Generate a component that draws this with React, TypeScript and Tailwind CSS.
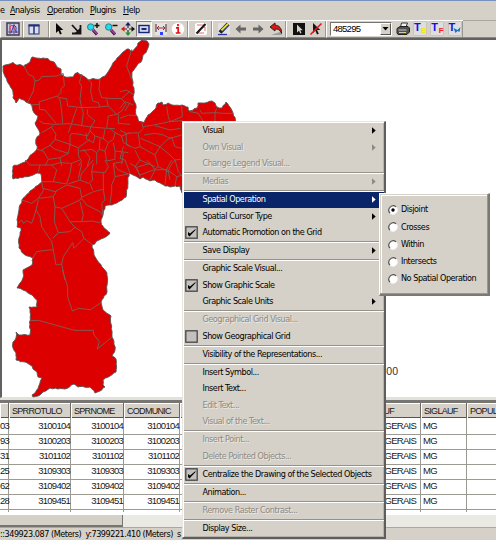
import React from 'react';

type Pt = [number, number];

const outline =
  '3,66 8,64.5 13,62.5 16,65 20,64.5 25,67 24.5,65 30,62 32,57 36,58 48,58.5 50,61 54,62 57,67 61,69 61,74 65,77 73,77 75,73.5 78,72.5 82,75 88,80 93,78.5 100,79 105,76 108,72 111,67 113,63 117,58 122,53 127,49 133,51 138,43 142,40 147,41 149,44 147,50 143,55 142,60 136,67 132,72 132.5,80 134,90 133,97 136,105 136,115 139,121.5 144,122.5 147,117 152,112 156,108 158,103 162,102 163,105 168,103 172,105 182,105 188,107 189,111 197,108 198,103 205,103 212,101 215,103 217,107 222,108 226,102 229,106 233,113 236,122 236,140 200,190 182,193 180,186 170,187 165,186 155,180 150,181 143,177 140,179 133,175 129,173 128,183 126,197 120,201 112,205 105,206 103,215 101,222 104,228 110,233 107,236 99,240 92,245 94,255 97,260 102,267 107,273 107,292 101,302 103,310 111,316 112,337 114,342 115,350 112,356 116,359 116,372 110,376 103,380 103,385 105,387 100,391 95,393 90,387 78,387 74,384 65,389 50,388 43,392 40,395 33,397 32,395 35,393 40,383 42,378 38,377 37,372 33,369 32,366 25,362 16,360 16,353 13,348 13,342 16,338 16,332 19,335 30,335 30,312 29,307 37,307 37,300 32,295 23,290 17,288 20,283 23,278 23,270 32,265 33,258 25,255 19,248 19,238 21,228 17,227 17,220 19,210 22,200 30,191 42,182 41,174 37,173 30,176 13,179 13,166 20,164 25,162 32,154 37,149 36,139 40,133 35,123 38,116 33,111 31,104 28,103 19,98 16,103 13,98 12,89 7,81 4,74';

// Breaks each long coast segment into short steps with a small deterministic offset.
function roughen(src: string, amp: number): string {
  const pts = src.split(' ').map((p) => p.split(',').map(Number) as Pt);
  const out: string[] = [];
  let seed = 7;
  const rnd = () => {
    seed = (seed * 16807) % 2147483647;
    return seed / 2147483647 - 0.5;
  };
  pts.forEach((p, i) => {
    const q = pts[(i + 1) % pts.length];
    const n = Math.max(1, Math.round(Math.hypot(q[0] - p[0], q[1] - p[1]) / 2.5));
    for (let k = 0; k < n; k++) {
      const t = k / n;
      const j = k === 0 ? 0 : amp;
      out.push(
        `${(p[0] + (q[0] - p[0]) * t + rnd() * j).toFixed(1)},${(p[1] + (q[1] - p[1]) * t + rnd() * j).toFixed(1)}`,
      );
    }
  });
  return out.join(' ');
}

const north =
  'M73,92 85,115 100,122 105,135 100,165 83,200M105,135 118,132 125,122 170,120 190,112M190,113 193,150 183,158 183,170 172,180 135,192 118,197 118,220 135,222 168,262M92,207 118,205M118,255 130,262 160,265 210,263 265,272 320,277 345,278M172,180 180,192 185,225 188,262M178,185 200,188 203,210 245,215 240,190 245,150 238,140 245,115M230,218 222,240 215,262M245,215 250,230 245,270M245,215 300,213 295,200 278,195 272,165 275,140 265,132M300,129 297,160 305,185 325,187 365,188 390,165M320,190 325,210 300,213M325,210 350,235 365,225 378,205 365,188M355,235 355,262 390,265M350,235 325,240 320,275M262,220 262,235 285,255 272,272 270,285M125,290 160,270M155,275 168,295 165,310 150,328 125,342M165,310 210,325 210,300 215,292 240,295 262,300 270,285 285,300 280,320 260,310 258,290M110,340 130,345 145,370 135,390M215,263 205,290M210,325 235,335 270,310M150,328 165,340 205,352 210,325M235,335 235,360 245,375 235,390M240,345 275,340 290,350 290,385M285,300 310,308 315,280M300,308 298,340 290,350M310,308 325,320 340,310 345,290 330,278M325,320 315,345 298,340M340,320 345,345 385,350M345,290 365,300 390,290M365,300 370,320 390,330M315,345 320,375 345,370 345,345M370,350 365,385M250,340 270,365 262,390M205,352 180,365 185,390M145,370 180,365M395,40 380,90 395,130M390,200 375,225';
const east =
  'M0,35 20,30 42,45M0,85 15,65 40,75M0,115 25,105 48,107M65,128 70,145 55,160 60,200 45,205 20,195 18,160 0,150M20,160 55,158M70,140 100,135 150,125 187,122M72,165 105,160 130,165 150,175 185,165M105,137 150,150 182,145M62,175 120,200 105,225 115,260 145,275 150,260 165,240 182,238M120,200 140,180 155,172M120,200 150,225 165,240M60,200 105,225M10,200 0,235 15,240 30,280M45,210 60,240 45,260 60,285M60,240 105,260M140,80 145,110 150,125M185,78 187,110 150,125M210,95 235,100 250,125M240,90 245,100 285,98 290,85M285,98 285,125M285,98 310,100 340,100M145,275 150,300M165,240 175,275 187,290M60,285 100,270 115,260M155,172 165,200 185,205';
const middle =
  'M75,0 90,15 120,15 155,15 180,8 215,10 240,0M120,15 115,35M155,15 170,30 160,65 125,65M160,65 200,72 210,40 215,10M205,72 240,60 245,40 280,0M245,10 235,55M240,60 265,70 278,60 275,35 315,38M275,35 280,10M310,38 310,90 315,120 305,130 308,160M335,95 330,130M385,42 345,50 335,75 335,95M65,120 95,130 115,115 130,92 125,65M130,85 165,95 200,75 240,85 245,112M160,110 170,90M165,140 185,145 240,120 245,112 280,95 310,88M245,115 260,135 300,155 308,165M115,115 160,110 165,140M115,120 108,150 120,170 125,200 155,245 160,270 168,315 185,312M165,140 163,185 175,218M185,145 210,185 225,202M240,125 250,165 245,185 210,185M245,185 275,183 300,188M175,218 158,235M175,218 210,215 225,202 245,215 252,235 277,254M252,235 222,265 218,248 190,290 185,312 195,360M98,295 110,275 145,270 160,270M55,190 65,180 70,190 80,182 95,190 102,170 108,150M278,90 270,70M315,0 325,20 315,38M340,10 355,30 385,42M345,50 340,10 370,5M390,10 410,22 420,50M410,22 450,10 465,30 450,60M465,30 500,28 495,75M500,28 530,50 525,78M450,10 440,0M500,28 515,0M530,50 548,45';
const south =
  'M187,0 203,50 203,80 217,123 235,115 272,119 304,97M91,152 115,151 205,176 225,181 280,181 281,193 298,215 292,237 335,202';

function MapDrawing() {
  return (
    <svg className="absolute left-0 top-0" width="250" height="400" viewBox="0 0 250 400" fill="none">
      <polygon points={roughen(outline, 1.3)} fill="#dd0000" stroke="#555" strokeWidth="0.9" />
      <g stroke="#7b6158" strokeWidth="2.7" strokeLinejoin="round">
        <path d={north} transform="translate(0 36) scale(.33333)" />
        <path d={east} transform="translate(120 80) scale(.33333)" />
        <path d={middle} transform="translate(0 160) scale(.33333)" />
        <path d={south} transform="translate(0 270) scale(.33333)" />
      </g>
    </svg>
  );
}

function Ico({ children }: { children: React.ReactNode }) {
  return (
    <span className="flex w-[17.3px] shrink-0 items-center justify-center">
      <svg width="14" height="14" viewBox="0 0 14 14" fill="none">
        {children}
      </svg>
    </span>
  );
}

function Group({ className, children }: { className: string; children: React.ReactNode }) {
  return (
    <div
      className={`flex h-[18px] shrink-0 items-center border-y border-l border-t-white border-b-[#8a8780] border-l-white shadow-[inset_-1px_0_0_#9a978f] ${className}`}
    >
      {children}
    </div>
  );
}

const pointer = 'M4 1v10l2.4-2.2L8 12.6l1.8-.8-1.7-3.7h3.2z';

function Lens({ plus }: { plus?: boolean }) {
  return (
    <>
      <path d="M7 8l4 4.500" stroke="#222" strokeWidth="3" />
      <path d="M7 8l4.200 4" stroke="#c22cc8" strokeWidth="1.700" />
      <circle cx="4.700" cy="5" r="3.200" fill="#20dcec" stroke="#357d88" />
      <path d={plus ? 'M8.500 3.500h5M11 1v5' : 'M8.500 3.500h5'} stroke="#111" strokeWidth="1.500" />
    </>
  );
}

function TIcon({ letter, color }: { letter: string; color: string }) {
  return (
    <span className="flex w-[17.3px] shrink-0 justify-center">
      <span className="relative h-[13px] w-[12px] bg-[#dedede] font-['Liberation_Sans',sans-serif] font-bold shadow-[0_0_1px_#888]">
        <span className="absolute left-0 top-0 text-[11px] leading-[11px] text-[#1111e0]">T</span>
        {letter === 'W' ? (
          <svg className="absolute bottom-[1px] right-0" width="8" height="7" viewBox="0 0 7 7">
            <path d="M0 1l2 5 2-2 2 1 1-5-3 3z" fill="#1674b8" />
          </svg>
        ) : (
          <span className={`absolute bottom-0 right-0 text-[8px] leading-[8px] ${color}`}>{letter}</span>
        )}
      </span>
    </span>
  );
}

function Toolbar() {
  return (
    <div className="flex h-[19px] shrink-0 items-center bg-[#d5d1c8]">
      <Group className="w-[22.500px] pl-[3px]">
        <Ico>
          <rect x="1" y="1" width="12" height="12" fill="#c8c8e6" stroke="#3b3b58" strokeWidth="1.500" />
          <path d="M4 2v10M2 10h10M8 2v10" stroke="#5b5b88" />
          <path d="M4 11V5l2-2 2 3 3 5" stroke="#e04050" />
          <path d="M5 11l3-8 2 2v6" stroke="#2638c8" />
        </Ico>
      </Group>
      <Group className="w-[26.500px] pl-[2px]">
        <Ico>
          <rect x="2" y="3" width="10" height="9" fill="#dcdcea" stroke="#20307c" />
          <path d="M1.500 3.500h11" stroke="#20307c" strokeWidth="2" />
          <path d="M7 3v9" stroke="#20307c" strokeWidth="1.500" />
        </Ico>
      </Group>
      <Group className="w-[139px]">
        <Ico>
          <path d={pointer} fill="#080808" />
        </Ico>
        <Ico>
          <path d="M3 3l6 6.500M11.500 3v8.500H3" stroke="#151515" strokeWidth="1.800" />
          <path d="M6 11h5V6z" fill="#151515" />
        </Ico>
        <Ico>
          <Lens plus />
        </Ico>
        <Ico>
          <Lens />
        </Ico>
        <Ico>
          <path d="M7 2v4M7 8v4M2 7h4M8 7h4" stroke="#333" strokeWidth="1.200" />
          <path d="M7 0l2.800 3.500H4.200z" fill="#18187c" />
          <path d="M0 7l3.500-2.800v5.600z" fill="#e01818" />
          <path d="M14 7l-3.500-2.800v5.600z" fill="#111" />
          <path d="M7 14l2.800-3.500H4.200z" fill="#169928" />
        </Ico>
        <span className="flex h-[16px] w-[16px] shrink-0 items-center justify-center border border-[#85827a] border-b-white border-r-white bg-[#e9e7e2]">
          <svg width="12" height="12" viewBox="0 0 12 12" fill="none">
            <rect x="1" y="2.500" width="10" height="7" stroke="#16257c" strokeWidth="1.400" fill="#d4d6ee" />
            <path d="M3.500 6h5" stroke="#16257c" strokeWidth="2" />
          </svg>
        </span>
        <Ico>
          <rect x="1" y="1" width="12" height="12" fill="#e5e2e0" />
          <path d="M2 2v8M12 2v8" stroke="#442233" />
          <path d="M3 6h8M5 4L3 6l2 2M9 4l2 2-2 2" stroke="#a02840" />
          <path d="M6 10h3v3H6z" fill="#3040ff" />
        </Ico>
        <Ico>
          <circle cx="7" cy="7" r="6.300" fill="#fff" />
          <path d="M7 2v2.200M5 5.800h2.200V11M4.700 11h4.800" stroke="#e81010" strokeWidth="1.700" />
        </Ico>
      </Group>
      <Group className="w-[24px] pl-[3px]">
        <Ico>
          <rect x="1" y="1" width="12" height="12" rx="2" fill="#fff" />
          <path d="M3 3h7L3.500 11H10M8 5h3v4" stroke="#ee6a6a" />
          <path d="M2.500 11.500l9-9.500" stroke="#161616" strokeWidth="2" />
        </Ico>
      </Group>
      <Group className="w-[74px] pl-[2px]">
        <Ico>
          <rect x="1" y="1" width="12" height="11" fill="#e3e1dd" />
          <path d="M3 10.500L11 2" stroke="#222" strokeWidth="4" />
          <path d="M4.500 8.500L11 2" stroke="#f4e62a" strokeWidth="2.200" />
          <path d="M5.500 9.500L12 3" stroke="#263bc0" strokeWidth="1.200" />
          <path d="M1 12.500h9" stroke="#2636a8" strokeWidth="1.300" />
        </Ico>
        <Ico>
          <path d="M1.500 7l5-4.500v3H12v3H6.500v3z" fill="#666" />
        </Ico>
        <Ico>
          <path d="M12.500 7l-5-4.500v3H2v3h5.500v3z" fill="#666" />
        </Ico>
        <Ico>
          <path d="M5 12l6-2 2 3H2z" fill="#9b9b9b" />
          <path d="M1 5l5-4v2.200c4 0 7 3 6.500 8.300C11 8 9 6.700 6 7v2z" fill="#e31515" stroke="#222" />
        </Ico>
      </Group>
      <Group className="w-[40px] pl-[3px]">
        <Ico>
          <rect x="1" y="1" width="12" height="12" fill="#101010" />
          <path d="M5 2.500v8l2-1.700 1.300 2.800 1.200-.6-1.200-2.700h2.500z" fill="#d5d1c8" />
        </Ico>
        <Ico>
          <path d={pointer} fill="#161616" />
          <path d="M1.500 12.500L12.500 1.500" stroke="#ee1515" strokeWidth="1.600" />
        </Ico>
      </Group>
      <Group className="w-[137px] pl-[3px]">
        <div className="mr-[2px] flex h-[14px] w-[62px] shrink-0 items-center justify-between border border-[#77746e] border-b-white border-r-white bg-white pl-[2px]">
          <span className="font-['Liberation_Sans',sans-serif] text-[9.5px] leading-none tracking-[-0.75px]">485295</span>
          <span className="flex h-[12px] w-[11px] items-center justify-center border border-white border-b-[#555] border-r-[#555] bg-[#d5d1c8]">
            <svg width="7" height="4" viewBox="0 0 7 4">
              <path d="M.5 0h6l-3 3.500z" fill="#000" />
            </svg>
          </span>
        </div>
        <Ico>
          <path d="M4.500 5l1-4h6l-1.500 4" fill="#f1f1f1" stroke="#333" />
          <path d="M1 6.500L4 4.500h8l1.500 1.500v4L11 12.500H2L1 11z" fill="#505050" stroke="#222" />
          <path d="M2.500 8h8M3 10.500h6" stroke="#c8c8c8" />
          <path d="M8 10.500h2" stroke="#e8e050" />
        </Ico>
        <TIcon letter="E" color="text-[#eee516]" />
        <TIcon letter="F" color="text-[#f01818]" />
        <TIcon letter="W" color="text-[#1674b8]" />
      </Group>
      <div className="h-[18px] flex-1 border-y border-b-[#8a8780] border-t-[#aaa79f]" />
    </div>
  );
}

type Item = { t: string; off?: boolean; sub?: boolean; box?: 'on' | 'off'; sel?: boolean };

const sections: Item[][] = [
  [
    { t: 'Visual', sub: true },
    { t: 'Own Visual', off: true, sub: true },
    { t: 'Change Legend Visual...', off: true },
  ],
  [{ t: 'Medias', off: true, sub: true }],
  [
    { t: 'Spatial Operation', sub: true, sel: true },
    { t: 'Spatial Cursor Type', sub: true },
    { t: 'Automatic Promotion on the Grid', box: 'on' },
  ],
  [{ t: 'Save Display', sub: true }],
  [
    { t: 'Graphic Scale Visual...' },
    { t: 'Show Graphic Scale', box: 'on' },
    { t: 'Graphic Scale Units', sub: true },
  ],
  [
    { t: 'Geographical Grid Visual...', off: true },
    { t: 'Show Geographical Grid', box: 'off' },
  ],
  [{ t: 'Visibility of the Representations...' }],
  [
    { t: 'Insert Symbol...' },
    { t: 'Insert Text...' },
    { t: 'Edit Text...', off: true },
    { t: 'Visual of the Text...', off: true },
  ],
  [
    { t: 'Insert Point...', off: true },
    { t: 'Delete Pointed Objects...', off: true },
  ],
  [{ t: 'Centralize the Drawing of the Selected Objects', box: 'on' }],
  [{ t: 'Animation...' }],
  [{ t: 'Remove Raster Contrast...', off: true }],
  [{ t: 'Display Size...' }],
];

function Row({ item }: { item: Item }) {
  const tone = item.sel
    ? 'bg-[#0a246a] text-white'
    : item.off
      ? 'text-[#8d8a83] [text-shadow:1px_1px_0_#eceae5]'
      : 'text-black';
  return (
    <div className={`flex h-[16.5px] items-center ${tone}`}>
      <span className="flex w-[18.5px] shrink-0 pl-[1px]">
        {item.box && (
          <svg width="13" height="13" viewBox="0 0 13 13" fill="none">
            <rect x=".8" y=".8" width="11.400" height="11.400" fill="#c3c1be" stroke="#454545" strokeWidth="1.300" />
            {item.box === 'on' && <path d="M3 6v3l1.500 1.500L10.500 4V3L5 7.500z" fill="#000" />}
          </svg>
        )}
      </span>
      <span className="flex-1 whitespace-nowrap">{item.t}</span>
      {item.sub && (
        <svg className="mr-[8.5px]" width="4" height="7" viewBox="0 0 4 7">
          <path d="M0 .3v6.400l3.700-3.200z" fill="currentColor" />
        </svg>
      )}
    </div>
  );
}

function ContextMenu() {
  return (
    <div className="absolute left-[182px] top-[121px] h-[418px] w-[204px] border border-[#e8e6e0] border-b-2 border-r-2 border-b-[#5f5e5c] border-r-[#5f5e5c] bg-[#d5d1c8] pl-[1px] pt-[0.7px] text-[9px] shadow-[inset_1px_1px_0_#fff,inset_-1px_-1px_0_#b5b2aa]">
      {sections.map((s, i) => (
        <React.Fragment key={i}>
          {i > 0 && (
            <div className="flex h-[1.5px] items-start">
              <div className="h-px w-full bg-[#95928b] shadow-[0_1px_0_#fff]" />
            </div>
          )}
          {s.map((it) => (
            <Row key={it.t} item={it} />
          ))}
        </React.Fragment>
      ))}
    </div>
  );
}

function SubMenu() {
  return (
    <div className="absolute left-[379px] top-[193px] flex h-[103px] w-[111px] flex-col border border-white border-b-2 border-r-2 border-b-[#7b7974] border-r-[#7b7974] bg-[#d5d1c8] pl-[8px] pt-[7.500px] text-[9px] shadow-[inset_-1px_-1px_0_#9a978f,inset_1px_1px_0_#d5d1c8,inset_2px_2px_0_#fff]">
      {['Disjoint', 'Crosses', 'Within', 'Intersects', 'No Spatial Operation'].map((t, i) => (
        <div key={t} className="flex h-[17.25px] items-center gap-[3px]">
          <svg className="shrink-0" width="10" height="10" viewBox="0 0 10 10" fill="none">
            <circle cx="5" cy="5" r="4.300" fill="#fff" stroke="#f6f5f2" />
            <path d="M1.900 8.100A4.400 4.400 0 0 1 8.100 1.900" stroke="#55534f" strokeWidth="1.200" />
            {i === 0 && <circle cx="5" cy="5" r="1.700" fill="#000" />}
          </svg>
          <span className="whitespace-nowrap">{t}</span>
        </div>
      ))}
    </div>
  );
}

const cols = 'grid grid-cols-[9px_62px_53px_56px_241px_46px_29px]';
const rows: [string, string][] = [
  ['03', '3100104'],
  ['93', '3100203'],
  ['31', '3101102'],
  ['25', '3109303'],
  ['62', '3109402'],
  ['28', '3109451'],
];

function DataGrid() {
  const head = 'border-r border-[#6a6864] pl-[3px] shadow-[inset_1px_1px_0_#fff]';
  const cell = 'border-b border-r border-[#9c9b93] text-right';
  return (
    <div className="h-[112px] shrink-0 overflow-hidden bg-white font-['Liberation_Sans',sans-serif] text-[9.5px] text-[#181818]">
      <div className={`${cols} h-[15px] border-b border-[#55534f] bg-[#d5d1c8] leading-[16px] text-[9px] tracking-[-0.7px]`}>
        <span className={head} />
        <span className={head}>SPRROTULO</span>
        <span className={head}>SPRNOME</span>
        <span className={head}>CODMUNIC</span>
        <span className={`${head} text-right`}>
          <span className="pr-[26px]">UF</span>
        </span>
        <span className={head}>SIGLAUF</span>
        <span className="pl-[3px] shadow-[inset_1px_1px_0_#fff]">POPUL</span>
      </div>
      {rows.map(([a, b]) => (
        <div key={b} className={`${cols} h-[15px] leading-[16px] tracking-[-0.75px]`}>
          <span className={cell}>{a}</span>
          <span className={cell}>{b}</span>
          <span className={cell}>{b}</span>
          <span className={cell}>{b}</span>
          <span className={`${cell} pr-[4px]`}>GERAIS</span>
          <span className="border-b border-r border-[#9c9b93] pl-[2px]">MG</span>
          <span className="border-b border-[#9c9b93]" />
        </div>
      ))}
      <div className={`${cols} h-[4px]`}>
        {[0, 1, 2, 3, 4, 5].map((i) => (
          <span key={i} className="border-r border-[#9c9b93]" />
        ))}
      </div>
    </div>
  );
}

export default function App() {
  return (
    <div className="relative flex h-[540px] w-[496px] flex-col overflow-hidden bg-[#d5d1c8] font-['DejaVu_Sans_Condensed','DejaVu_Sans',sans-serif] tracking-[-0.46px] text-black">
      <div className="h-[1px] shrink-0 bg-[#7890bd]" />
      <nav className="flex h-[18px] shrink-0 items-center text-[9px] leading-[14px]">
        <span className="w-[10px]">e</span>
        <span className="w-[37px]"><u>A</u>nalysis</span>
        <span className="w-[43px]"><u>O</u>peration</span>
        <span className="w-[33px]"><u>P</u>lugins</span>
        <span><u>H</u>elp</span>
      </nav>
      <Toolbar />
      <div className="h-[360px] shrink-0 border-l-2 border-t-2 border-[#62615f] border-b border-b-[#e3e1dc] bg-white">
        <div className="flex h-full items-end justify-end pb-[21px] pr-[98px] font-['Liberation_Sans',sans-serif] text-[10.5px] leading-none tracking-normal text-[#333]">
          00
        </div>
      </div>
      <div className="h-[5px] shrink-0 border-b-[3px] border-t-2 border-b-[#777572] border-t-[#e3e1dc]" />
      <DataGrid />
      <div className="flex h-[13px] shrink-0 bg-[#ebe9e4] border-b border-[#aaa79f]">
        <div className="w-[123px] border-b-2 border-r border-[#77756f] bg-[#d5d1c8]" />
      </div>
      <div className="flex flex-1 items-center whitespace-nowrap text-[9px] leading-[13px]">
        <span className="whitespace-pre">::349923.087 (Meters)  y:7399221.410 (Meters)  s</span>
      </div>
      <MapDrawing />
      <ContextMenu />
      <SubMenu />
    </div>
  );
}
